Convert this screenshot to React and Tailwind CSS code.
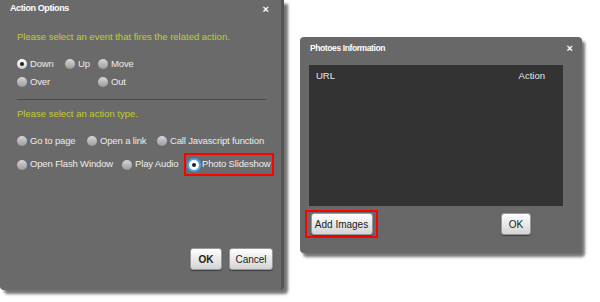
import React from "react";

const Radio = ({ checked, focus }) => (
  <span
    className={
      "w-[10px] h-[10px] rounded-full shrink-0 flex items-center justify-center " +
      (focus
        ? "bg-white ring-2 ring-[#4aa3e8]"
        : checked
        ? "bg-gradient-to-b from-white to-[#d0d0d0]"
        : "bg-gradient-to-b from-[#d6d6d6] to-[#9c9c9c]")
    }
  >
    {(checked || focus) && <span className="w-[4px] h-[4px] rounded-full bg-[#222]"></span>}
  </span>
);

const Option = ({ label, checked, focus, width }) => (
  <div className={"flex items-center gap-[3px] shrink-0 " + (width || "")}>
    <Radio checked={checked} focus={focus} />
    <span className="text-[#ececec] whitespace-nowrap tracking-[-0.15px]">{label}</span>
  </div>
);

const Btn = ({ children, className }) => (
  <button
    className={
      "h-[22px] rounded-[3px] bg-gradient-to-b from-white to-[#d4d4d4] border border-[#999] text-[#222] text-[10px] shadow-[0_1px_1px_rgba(0,0,0,0.4)] " +
      (className || "")
    }
  >
    {children}
  </button>
);

export default function App() {
  return (
    <div
      className="w-[600px] h-[302px] bg-white flex items-start overflow-hidden"
      style={{ fontFamily: '"Liberation Sans", Arial, sans-serif' }}
    >
      {/* Action Options */}
      <div className="w-[284px] h-[290px] bg-[#6a6a6a] rounded-b-[4px] border-r-[3px] border-[#555] shadow-[4px_4px_3px_rgba(0,0,0,0.55)] flex flex-col text-[9.5px] shrink-0">
        <div className="h-[18px] flex items-center justify-between pl-[10px] pr-[12px]">
          <span className="text-white font-bold text-[9px] tracking-[-0.4px]">Action Options</span>
          <span className="text-white font-bold text-[11px] leading-none">×</span>
        </div>
        <div className="px-[17px] flex flex-col">
          <div className="mt-[13px] text-[#c3cc2c] leading-[12px]">
            Please select an event that fires the related action.
          </div>
          <div className="mt-[15px] flex items-center h-[12px]">
            <Option label="Down" checked width="w-[48px]" />
            <Option label="Up" width="w-[33px]" />
            <Option label="Move" />
          </div>
          <div className="mt-[6px] flex items-center h-[12px]">
            <Option label="Over" width="w-[81px]" />
            <Option label="Out" />
          </div>
          <div className="mt-[11px] h-px w-[249px] bg-[#4a4a4a]"></div>
          <div className="mt-[8px] text-[#c3cc2c] leading-[12px]">Please select an action type.</div>
          <div className="mt-[15px] flex items-center h-[12px]">
            <Option label="Go to page" width="w-[70px]" />
            <Option label="Open a link" width="w-[70px]" />
            <Option label="Call Javascript function" />
          </div>
          <div className="mt-[6px] flex items-center h-[23px]">
            <Option label="Open Flash Window" width="w-[105px]" />
            <Option label="Play Audio" width="w-[62px]" />
            <div className="h-[23px] w-[90px] shrink-0 border-2 border-[#ff0000] flex items-center pl-[3px]">
              <Option label="Photo Slideshow" focus />
            </div>
          </div>
        </div>
        <div className="mt-auto mb-[20px] flex justify-end gap-[7px] pr-[8px]">
          <Btn className="w-[32px] font-bold">OK</Btn>
          <Btn className="w-[44px]">Cancel</Btn>
        </div>
      </div>

      {/* Photoes Information */}
      <div className="ml-[16px] mt-[37px] w-[282px] h-[216px] bg-[#686868] rounded-[4px] shadow-[3px_4px_3px_rgba(0,0,0,0.55)] flex flex-col text-[9.5px] shrink-0">
        <div className="h-[20px] flex items-center justify-between pl-[10px] pr-[9px] pt-[2px]">
          <span className="text-white font-bold text-[8.5px] tracking-[-0.4px]">Photoes Information</span>
          <span className="text-white font-bold text-[11px] leading-none">×</span>
        </div>
        <div className="ml-[9px] mt-[8px] w-[254px] h-[141px] bg-[#333333]">
          <div className="h-[22px] flex items-center justify-between pl-[7px] pr-[18px] text-[#e6e6e6]">
            <span>URL</span>
            <span>Action</span>
          </div>
        </div>
        <div className="mt-[4px] flex items-center justify-between pl-[5px] pr-[51px]">
          <div className="w-[73px] h-[28px] border-2 border-[#ff0000] flex items-center justify-center">
            <Btn className="w-[62px] h-[21px]">Add Images</Btn>
          </div>
          <Btn className="w-[30px] h-[21px]">OK</Btn>
        </div>
      </div>
    </div>
  );
}
